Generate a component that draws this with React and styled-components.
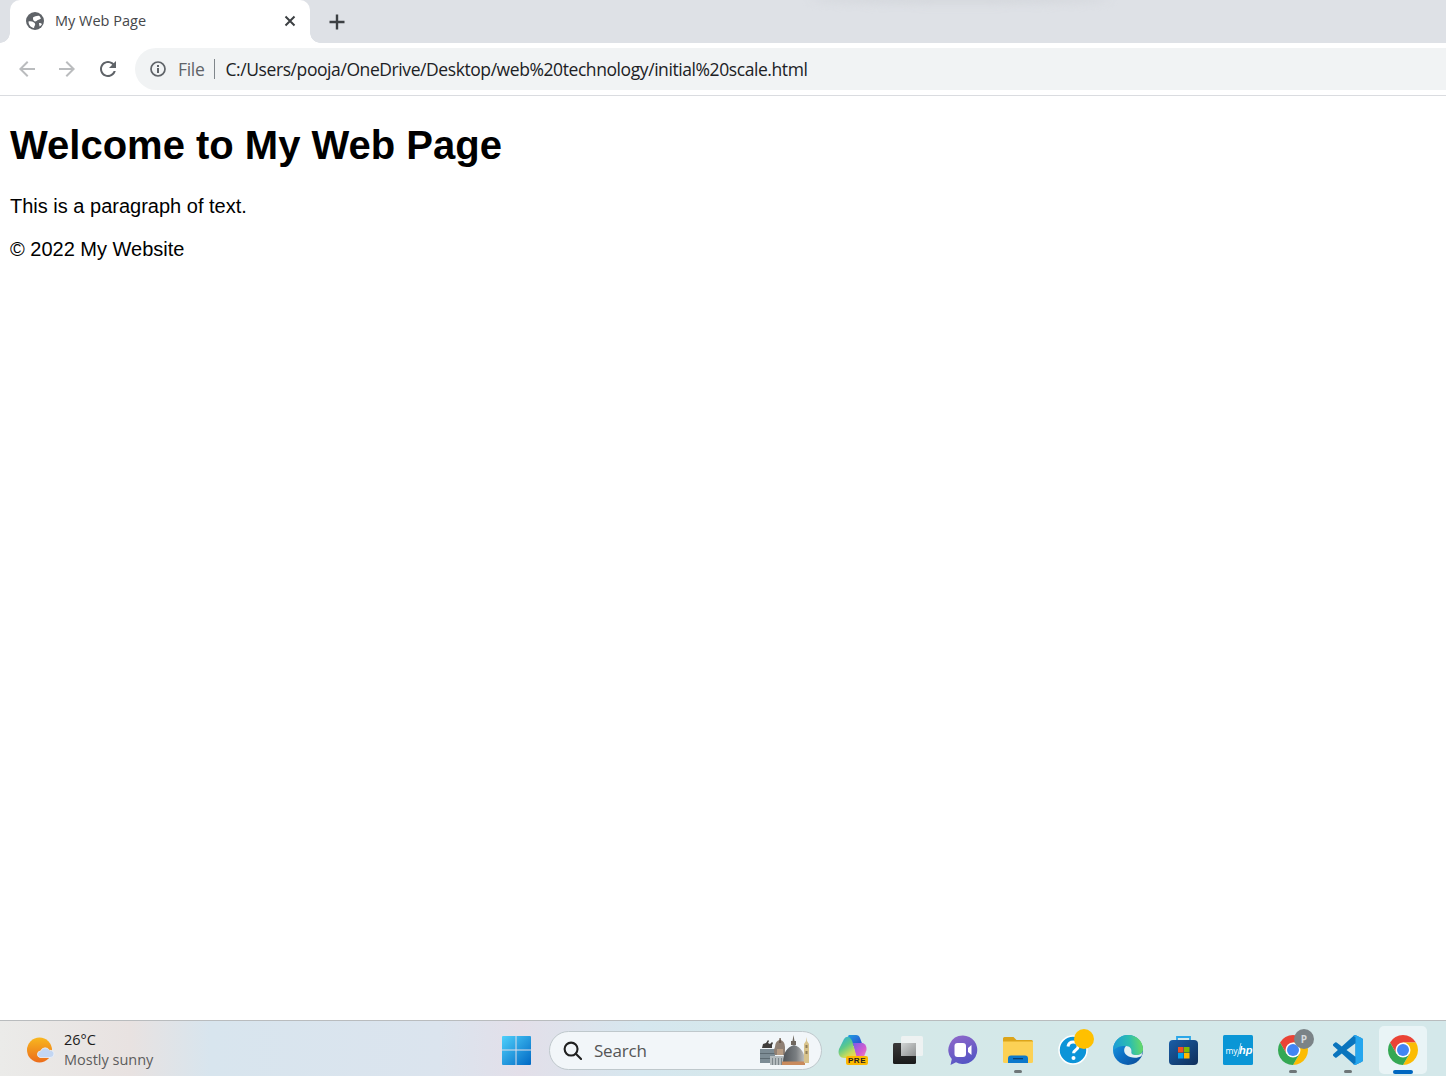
import React from 'react'
import styled, { createGlobalStyle } from 'styled-components'

const GlobalStyle = createGlobalStyle`
  html, body, #root {
    margin: 0;
    height: 100%;
  }
  body {
    background: #fff;
    overflow: hidden;
  }
`

const Window = styled.div`
  display: flex;
  flex-direction: column;
  height: 1076px;
`

/* tab strip */
const TabStrip = styled.div`
  position: relative;
  display: flex;
  align-items: flex-end;
  height: 43px;
  padding-left: 10px;
  background: #dee1e6;
  flex: none;
`
const StripShadow = styled.div`
  position: absolute;
  top: -6px;
  left: 810px;
  width: 300px;
  height: 10px;
  border-radius: 50%;
  background: #d4d7dc;
  filter: blur(4px);
`
const Tab = styled.div`
  position: relative;
  display: flex;
  align-items: center;
  width: 300px;
  height: 43px;
  box-sizing: border-box;
  padding: 0 14px 2px 16px;
  background: #fff;
  border-radius: 10px 10px 0 0;
  &::before,
  &::after {
    content: '';
    position: absolute;
    bottom: 0;
    width: 10px;
    height: 10px;
  }
  &::before {
    left: -10px;
    background: radial-gradient(circle at 0 0, #dee1e6 9.5px, #fff 10px);
  }
  &::after {
    right: -10px;
    background: radial-gradient(circle at 100% 0, #dee1e6 9.5px, #fff 10px);
  }
`
const TabTitle = styled.span`
  flex: 1;
  margin-left: 11px;
  font: 14.5px 'Open Sans', sans-serif;
  color: #45474a;
`
const NewTab = styled.div`
  display: flex;
  align-items: center;
  justify-content: center;
  width: 28px;
  height: 43px;
  margin-left: 13px;
`

/* toolbar */
const Toolbar = styled.div`
  display: flex;
  align-items: center;
  flex: none;
  height: 53px;
  box-sizing: border-box;
  padding: 5px 0 5px 15px;
  background: #fff;
  border-bottom: 1px solid #dadce0;
`
const NavButton = styled.div`
  display: flex;
  justify-content: center;
  width: 24px;
  margin-right: ${p => p.$gap || 16}px;
  color: ${p => (p.$disabled ? '#babcbe' : '#5f6368')};
`
const Omnibox = styled.div`
  display: flex;
  align-items: center;
  flex: 1;
  height: 42px;
  margin-left: -1px;
  padding-left: 14px;
  background: #f1f3f4;
  border-radius: 21px 0 0 21px;
  font: 18px 'Open Sans', sans-serif;
`
const Scheme = styled.span`
  margin-left: 11px;
  padding-right: 9px;
  font-size: 17.5px;
  letter-spacing: -0.3px;
  line-height: 20px;
  color: #5f6368;
  border-right: 1px solid #80868b;
`
const Url = styled.span`
  margin-left: 11px;
  font-size: 17.5px;
  letter-spacing: -0.42px;
  color: #202124;
`

/* page body */
const Page = styled.main`
  flex: 1;
  padding: 0 10px;
  background: #fff;
  color: #000;
  font-family: 'Liberation Sans', Arial, sans-serif;
`
const Heading = styled.h1`
  margin: 25px 0 0;
  font-size: 40px;
  line-height: 48px;
  font-weight: 700;
`
const Paragraph = styled.p`
  margin: 24px 0 0;
  font-size: 20px;
  line-height: 26px;
`
const Footer = styled(Paragraph)`
  margin-top: 17px;
`

/* taskbar */
const Taskbar = styled.footer`
  display: flex;
  align-items: center;
  flex: none;
  height: 56px;
  box-sizing: border-box;
  padding: 3px 0 0 27px;
  border-top: 1px solid #b9bcbe;
  background: linear-gradient(90deg, #ebebe9 0, #e8e2e1 130px, #d8e5ee 210px, #dbe4ee 440px, #e3dfe9 520px, #d6e7ef 640px, #d4e8e8 820px, #d4e8ea 1446px);
`
const Weather = styled.div`
  display: flex;
  align-items: center;
  gap: 9px;
  width: 475px;
`
const WeatherText = styled.div`
  font: 14.5px/20.5px 'Open Sans', sans-serif;
  color: #1c1c1c;
`
const WeatherSub = styled.div`
  color: #5c5c5c;
`
const StartButton = styled.div`
  display: flex;
  width: 29px;
  height: 29px;
  margin-right: 18px;
`
const SearchBox = styled.div`
  display: flex;
  align-items: center;
  flex: none;
  width: 273px;
  height: 39px;
  box-sizing: border-box;
  padding: 0 11px 0 13px;
  margin-right: 3.5px;
  border: 1px solid #bfc8cc;
  border-radius: 20px;
  background: #f2f6f9;
`
const SearchLabel = styled.span`
  flex: 1;
  margin-left: 12px;
  font: 17px 'Open Sans', sans-serif;
  letter-spacing: -0.2px;
  color: #555;
`
const TrayItem = styled.div`
  position: relative;
  display: flex;
  align-items: center;
  justify-content: center;
  flex: none;
  width: 55px;
  height: 52px;
  &::before {
    content: ${p => (p.$active ? "''" : 'none')};
    position: absolute;
    top: 2px;
    left: 3.5px;
    width: 48px;
    height: 48px;
    border-radius: 5px;
    background: #e9f4f6;
  }
  &::after {
    content: ${p => (p.$running || p.$active ? "''" : 'none')};
    position: absolute;
    bottom: ${p => (p.$active ? 2 : 3)}px;
    left: 50%;
    width: ${p => (p.$active ? 20 : 8)}px;
    height: ${p => (p.$active ? 4 : 3)}px;
    margin-left: ${p => (p.$active ? -10 : -4)}px;
    border-radius: 2px;
    background: ${p => (p.$active ? '#0067c0' : '#6e7678')};
  }
  > svg {
    position: relative;
  }
`
const PreBadge = styled.span`
  position: absolute;
  left: 20.5px;
  top: 32px;
  width: 22px;
  height: 9px;
  border-radius: 2px;
  background: #fcb900;
  font: 700 8px/9px 'Liberation Sans', sans-serif;
  letter-spacing: 0.6px;
  text-align: center;
  color: #222;
`
const Dot = styled.span`
  position: absolute;
  left: 28.5px;
  top: 5px;
  width: 20px;
  height: 20px;
  border-radius: 50%;
  background: #ffc000;
`
const ProfileBadge = styled.span`
  position: absolute;
  left: 28.5px;
  top: 5px;
  width: 20px;
  height: 20px;
  border-radius: 50%;
  background: #7b8387;
  font: 700 10px/20px 'Open Sans', sans-serif;
  text-align: center;
  color: #d5dadd;
`

/* drawings */
const GlobeIcon = () => (
  <svg width='18' height='18' viewBox='0 0 18 18'>
    <circle cx='9' cy='9' r='9' fill='#5f6368' />
    <path d='M7 5.500c2-1 4-2 6.500-1.500l1.500 2.500c-1.500 1.500-3.500 1-4.500 2.500-1 1-4 .5-3.500-3.500z' fill='#fff' />
    <path d='M2.500 9.500c2-.5 4 0 5.500 1 1.500 1 1.500 2.500 .5 3.500l-.5 2c-3-.5-5.500-3-5.500-6.500z' fill='#fff' />
    <path d='M13 11c1.500 0 2.500 .5 3 1-.5 1-1.500 2-2.500 2.500z' fill='#fff' />
  </svg>
)
const CloseIcon = () => (
  <svg width='12' height='12' viewBox='0 0 12 12' stroke='#3c4043' strokeWidth='2'>
    <path d='M1.500 1.500l9 9M10.500 1.500l-9 9' />
  </svg>
)
const PlusIcon = () => (
  <svg width='16' height='16' viewBox='0 0 16 16' stroke='#3c4043' strokeWidth='2.400'>
    <path d='M8 .5v15M.5 8h15' />
  </svg>
)
const ArrowLeft = () => (
  <svg width='24' height='24' viewBox='0 0 24 24' fill='currentColor'>
    <path d='M20 11H7.830l5.590-5.590L12 4l-8 8 8 8 1.410-1.410L7.830 13H20v-2z' />
  </svg>
)
const ArrowRight = () => (
  <svg width='24' height='24' viewBox='0 0 24 24' fill='currentColor'>
    <path d='M12 4l-1.410 1.410L16.170 11H4v2h12.170l-5.580 5.590L12 20l8-8z' />
  </svg>
)
const ReloadIcon = () => (
  <svg width='24' height='24' viewBox='0 0 24 24' fill='currentColor'>
    <path d='M17.650 6.350C16.200 4.900 14.210 4 12 4c-4.420 0-7.990 3.580-7.990 8s3.570 8 7.990 8c3.730 0 6.840-2.550 7.730-6h-2.080c-.82 2.330-3.040 4-5.650 4-3.310 0-6-2.690-6-6s2.690-6 6-6c1.660 0 3.140.69 4.220 1.780L13 11h7V4l-2.350 2.350z' />
  </svg>
)
const InfoIcon = () => (
  <svg width='18' height='18' viewBox='0 0 18 18'>
    <circle cx='9' cy='9' r='7' fill='none' stroke='#5f6368' strokeWidth='1.700' />
    <path d='M8 8h2v5H8zM8 5h2v2H8z' fill='#5f6368' />
  </svg>
)
const SunCloud = () => (
  <svg width='28' height='27' viewBox='0 0 28 27'>
    <defs>
      <linearGradient id='sun' x1='0' y1='0' x2='0' y2='1'>
        <stop offset='0' stopColor='#f8b71f' />
        <stop offset='1' stopColor='#ec6c1b' />
      </linearGradient>
    </defs>
    <circle cx='12.500' cy='13' r='12.500' fill='url(#sun)' />
    <path d='M13 20.500a3.300 3.300 0 0 1 .6-6.500 5 5 0 0 1 9-.6 3.600 3.600 0 0 1 4.400 3.500 3.600 3.600 0 0 1-3.700 3.600z' fill='#c3d6f2' stroke='#eef3fb' strokeWidth='0.800' />
  </svg>
)
const WindowsLogo = () => (
  <svg width='29' height='29' viewBox='0 0 30 30'>
    <defs>
      <linearGradient id='win' x1='0' y1='0' x2='1' y2='1'>
        <stop offset='0' stopColor='#4fd0fb' />
        <stop offset='1' stopColor='#0068c4' />
      </linearGradient>
    </defs>
    <path d='M1 0h13v14H0V1a1 1 0 0 1 1-1zM15 0h14a1 1 0 0 1 1 1v13H15zM0 15h14v15H1a1 1 0 0 1-1-1zM15 15h15v14a1 1 0 0 1-1 1H15z' fill='url(#win)' />
  </svg>
)
const SearchGlass = () => (
  <svg width='19' height='19' viewBox='0 0 20 20' fill='none' stroke='#202020' strokeWidth='2.200'>
    <circle cx='8.500' cy='8.500' r='6.800' />
    <path d='M13.500 13.500L19 19' strokeLinecap='round' />
  </svg>
)
const CityArt = () => (
  <svg width='52' height='30' viewBox='0 0 52 30'>
    <defs>
      <linearGradient id='dome' x1='0' y1='0' x2='1' y2='0'>
        <stop offset='0' stopColor='#4f5459' />
        <stop offset='0.6' stopColor='#7b7f82' />
        <stop offset='1' stopColor='#c3c3c0' />
      </linearGradient>
    </defs>
    <path d='M4 13l1-4 3-1 2-3 1 1-1 2 2 1 2-2 1 1-1 2v3z' fill='#3f3c3a' />
    <path d='M2 14h15v14H2z' fill='#7d8c95' />
    <path d='M2 18h15v1H2zM2 23h15v1H2z' fill='#5d6a72' />
    <path d='M17 20a5 7 0 0 1 0-8 5 7 0 0 1 10 0v8z' fill='#8f8074' />
    <path d='M21.500 3h1.200l.6 5h-2.400z' fill='#6b5a4e' />
    <path d='M19 14h6v6h-6z' fill='#b79c84' />
    <path d='M12 21h13v9H12z' fill='#b3babd' />
    <path d='M14 23h1v7h-1zM17 23h1v7h-1zM20 23h1v7h-1zM23 23h1v7h-1z' fill='#7e878b' />
    <path d='M25 27c0-9 4-15 11-17 7 2 11 8 11 17z' fill='url(#dome)' />
    <path d='M33 10V6h1.500l1-6 1 6H38v4z' fill='#6f675f' />
    <path d='M24 26.500h23V30H24z' fill='#c98a5c' />
    <path d='M46 28V9l2-3 .5-4 .5 4 2 3v19z' fill='#d8c38c' />
    <path d='M47.500 10h2v3h-2zM47.500 16h2v3h-2z' fill='#8f7f5a' />
  </svg>
)
const CopilotIcon = () => (
  <svg width='30' height='30' viewBox='0 0 30 30'>
    <defs>
      <linearGradient id='cpa' x1='0.200' y1='0' x2='0.800' y2='1'>
        <stop offset='0' stopColor='#2fb0d8' />
        <stop offset='0.400' stopColor='#5cc98a' />
        <stop offset='0.750' stopColor='#c8dc5a' />
        <stop offset='1' stopColor='#f7d64c' />
      </linearGradient>
      <linearGradient id='cpb' x1='0' y1='0' x2='1' y2='1'>
        <stop offset='0' stopColor='#7b5ce6' />
        <stop offset='0.600' stopColor='#d35bd0' />
        <stop offset='1' stopColor='#f58ab8' />
      </linearGradient>
      <linearGradient id='cpc' x1='0' y1='0' x2='1' y2='1'>
        <stop offset='0' stopColor='#1f9fe0' />
        <stop offset='1' stopColor='#2a3fd0' />
      </linearGradient>
    </defs>
    <path d='M11 0h7q3 0 4 3l3 8H14L10 3q0-3 1-3z' fill='url(#cpc)' />
    <path d='M15 8h10q4 2 3.500 7l-3 8H18z' fill='url(#cpb)' />
    <path d='M6 4q2-3 5-2 3 2 4 7l4 14H6q-7-1-5-9z' fill='url(#cpa)' />
  </svg>
)
const SnapIcon = () => (
  <svg width='30' height='28' viewBox='0 0 30 28'>
    <defs>
      <linearGradient id='snapDark' x1='0' y1='0' x2='0' y2='1'>
        <stop offset='0' stopColor='#3a3a3a' />
        <stop offset='1' stopColor='#1a1a1a' />
      </linearGradient>
      <linearGradient id='snapMid' x1='0' y1='0' x2='1' y2='1'>
        <stop offset='0' stopColor='#d2d5d5' />
        <stop offset='1' stopColor='#8e9090' />
      </linearGradient>
    </defs>
    <rect x='0' y='7' width='23' height='21' rx='1.500' fill='url(#snapDark)' />
    <rect x='8' y='0' width='22' height='20' rx='1.500' fill='#eef2f2' />
    <rect x='8' y='7' width='15' height='13' fill='url(#snapMid)' />
  </svg>
)
const MeetIcon = () => (
  <svg width='30' height='30' viewBox='0 0 30 30'>
    <defs>
      <linearGradient id='meet' x1='0.300' y1='0' x2='0.700' y2='1'>
        <stop offset='0' stopColor='#8c67c9' />
        <stop offset='1' stopColor='#5053c4' />
      </linearGradient>
    </defs>
    <path d='M15 0.500a14.300 14.300 0 1 1-7 26.800L2.500 30l1.300-6A14.300 14.300 0 0 1 15 0.500z' fill='url(#meet)' />
    <rect x='6.500' y='8' width='11.500' height='14' rx='3' fill='#fff' />
    <path d='M20 13l3.500-3v10l-3.500-3z' fill='#fff' />
  </svg>
)
const FolderIcon = () => (
  <svg width='30' height='26' viewBox='0 0 30 26'>
    <path d='M0 1.500A1.500 1.500 0 0 1 1.500 0h9l3 3h15A1.500 1.500 0 0 1 30 4.500V8H0z' fill='#dca41a' />
    <path d='M0 4.500h30v20a1.500 1.500 0 0 1-1.500 1.500h-27A1.500 1.500 0 0 1 0 24.500z' fill='#fcd155' />
    <path d='M5 26v-4.500A3 3 0 0 1 8 18.500h14a3 3 0 0 1 3 3V26z' fill='#0c79cc' />
    <path d='M10 21h10v1.300H10z' fill='#073f74' />
  </svg>
)
const HelpIcon = () => (
  <svg width='30' height='30' viewBox='0 0 30 30'>
    <circle cx='15' cy='15' r='14' fill='#0c94d8' stroke='#fff' strokeWidth='1.500' />
    <path d='M10 11.500c.5-3 2.500-4.500 5.200-4.500 3 0 5 1.800 5 4.300 0 4-4.600 3.500-4.600 7' fill='none' stroke='#fff' strokeWidth='3' />
    <circle cx='15.500' cy='23' r='2' fill='#fff' />
  </svg>
)
const EdgeIcon = () => (
  <svg width='30' height='30' viewBox='0 0 30 30'>
    <defs>
      <linearGradient id='edgeBody' x1='0' y1='0.200' x2='0.800' y2='1'>
        <stop offset='0' stopColor='#1a9ce0' />
        <stop offset='0.500' stopColor='#0c6fc4' />
        <stop offset='1' stopColor='#0b4f9c' />
      </linearGradient>
      <linearGradient id='edgeTop' x1='0' y1='0.500' x2='1' y2='0.400'>
        <stop offset='0' stopColor='#1c9bd8' />
        <stop offset='0.550' stopColor='#2bbdb0' />
        <stop offset='1' stopColor='#6bdc62' />
      </linearGradient>
    </defs>
    <circle cx='15' cy='15' r='15' fill='url(#edgeBody)' />
    <path d='M0.500 11C3 4 8 0 15 0c9 0 15 6.500 15 14 0 4-3 6-7 6-3 0-5-1-4.500-3 .5-3-1.500-6-6.500-6-5 0-9 1-12 5z' fill='url(#edgeTop)' />
    <path d='M13 11c-2.500 2-2.500 7 .5 9 3.500 3 10.500 4 15 1L30 15c0 3-3 5-7 5-3 0-5-1-4.500-3 .5-3-1.500-6-5.500-6z' fill='#e4f1f3' />
  </svg>
)
const StoreIcon = () => (
  <svg width='29' height='29' viewBox='0 0 29 29'>
    <defs>
      <linearGradient id='store' x1='0' y1='0' x2='1' y2='1'>
        <stop offset='0' stopColor='#1a5ea8' />
        <stop offset='1' stopColor='#0f2f5a' />
      </linearGradient>
    </defs>
    <path d='M8 5V1h13v4' fill='none' stroke='#2aa6e8' strokeWidth='1.800' />
    <rect x='0' y='4' width='29' height='25' rx='4' fill='url(#store)' />
    <rect x='9' y='11' width='5.500' height='5.500' fill='#f25022' />
    <rect x='15' y='11' width='5.500' height='5.500' fill='#7fba00' />
    <rect x='9' y='17' width='5.500' height='5.500' fill='#00a4ef' />
    <rect x='15' y='17' width='5.500' height='5.500' fill='#ffb900' />
  </svg>
)
const MyHpIcon = () => (
  <svg width='30' height='30' viewBox='0 0 30 30'>
    <rect width='30' height='30' rx='1.500' fill='#0a96d6' />
    <text x='2.500' y='18.500' fontFamily='Open Sans, sans-serif' fontSize='8.500' fill='#fff'>my</text>
    <path d='M14.500 22l3.500-14' stroke='#fff' strokeWidth='0.700' />
    <text x='16' y='18.500' fontFamily='Liberation Sans, sans-serif' fontSize='11' fontWeight='700' fontStyle='italic' fill='#fff'>hp</text>
  </svg>
)
const ChromeIcon = () => (
  <svg width='30' height='30' viewBox='4 4 40 40'>
    <path d='M24 14h17.320A20 20 0 0 0 6.680 14l8.660 15z' fill='#ea4335' />
    <path d='M41.320 14A20 20 0 0 1 24 44l8.660-15L24 14z' fill='#fbbc04' />
    <path d='M24 44A20 20 0 0 1 6.680 14l8.660 15h17.320z' fill='#34a853' />
    <circle cx='24' cy='24' r='10' fill='#fff' />
    <circle cx='24' cy='24' r='8' fill='#4285f4' />
  </svg>
)
const VsCodeIcon = () => (
  <svg width='30' height='30' viewBox='0 0 24 24'>
    <path d='M23.150 2.587L18.210.21a1.494 1.494 0 0 0-1.705.29l-9.460 8.630-4.120-3.128a.999.999 0 0 0-1.276.057L.327 7.261A1 1 0 0 0 .326 8.740L3.899 12 .326 15.260a1 1 0 0 0 .001 1.479L1.650 17.940a.999.999 0 0 0 1.276.057l4.120-3.128 9.460 8.630a1.492 1.492 0 0 0 1.704.29l4.942-2.377A1.500 1.500 0 0 0 24 20.060V3.939a1.500 1.500 0 0 0-.85-1.352zm-5.146 14.861L10.826 12l7.178-5.448v10.896z' fill='#0a74bd' />
    <path d='M23.150 2.587L18.210.21a1.494 1.494 0 0 0-1.705.29l-.2.2 1.700 1v20.600l-1.700 1 .2.200a1.492 1.492 0 0 0 1.704.29l4.942-2.377A1.500 1.500 0 0 0 24 20.060V3.939a1.500 1.500 0 0 0-.85-1.352z' fill='#25a6ee' />
  </svg>
)

export default function App () {
  return (
    <Window>
      <GlobalStyle />
      <TabStrip>
        <StripShadow />
        <Tab>
          <GlobeIcon />
          <TabTitle>My Web Page</TabTitle>
          <CloseIcon />
        </Tab>
        <NewTab>
          <PlusIcon />
        </NewTab>
      </TabStrip>
      <Toolbar>
        <NavButton $disabled><ArrowLeft /></NavButton>
        <NavButton $disabled $gap={17}><ArrowRight /></NavButton>
        <NavButton><ReloadIcon /></NavButton>
        <Omnibox>
          <InfoIcon />
          <Scheme>File</Scheme>
          <Url>C:/Users/pooja/OneDrive/Desktop/web%20technology/initial%20scale.html</Url>
        </Omnibox>
      </Toolbar>
      <Page>
        <Heading>Welcome to My Web Page</Heading>
        <Paragraph>This is a paragraph of text.</Paragraph>
        <Footer>© 2022 My Website</Footer>
      </Page>
      <Taskbar>
        <Weather>
          <SunCloud />
          <WeatherText>
            26°C
            <WeatherSub>Mostly sunny</WeatherSub>
          </WeatherText>
        </Weather>
        <StartButton><WindowsLogo /></StartButton>
        <SearchBox>
          <SearchGlass />
          <SearchLabel>Search</SearchLabel>
          <CityArt />
        </SearchBox>
        <TrayItem><CopilotIcon /><PreBadge>PRE</PreBadge></TrayItem>
        <TrayItem><SnapIcon /></TrayItem>
        <TrayItem><MeetIcon /></TrayItem>
        <TrayItem $running><FolderIcon /></TrayItem>
        <TrayItem><HelpIcon /><Dot /></TrayItem>
        <TrayItem><EdgeIcon /></TrayItem>
        <TrayItem><StoreIcon /></TrayItem>
        <TrayItem><MyHpIcon /></TrayItem>
        <TrayItem $running><ChromeIcon /><ProfileBadge>P</ProfileBadge></TrayItem>
        <TrayItem $running><VsCodeIcon /></TrayItem>
        <TrayItem $active><ChromeIcon /></TrayItem>
      </Taskbar>
    </Window>
  )
}
